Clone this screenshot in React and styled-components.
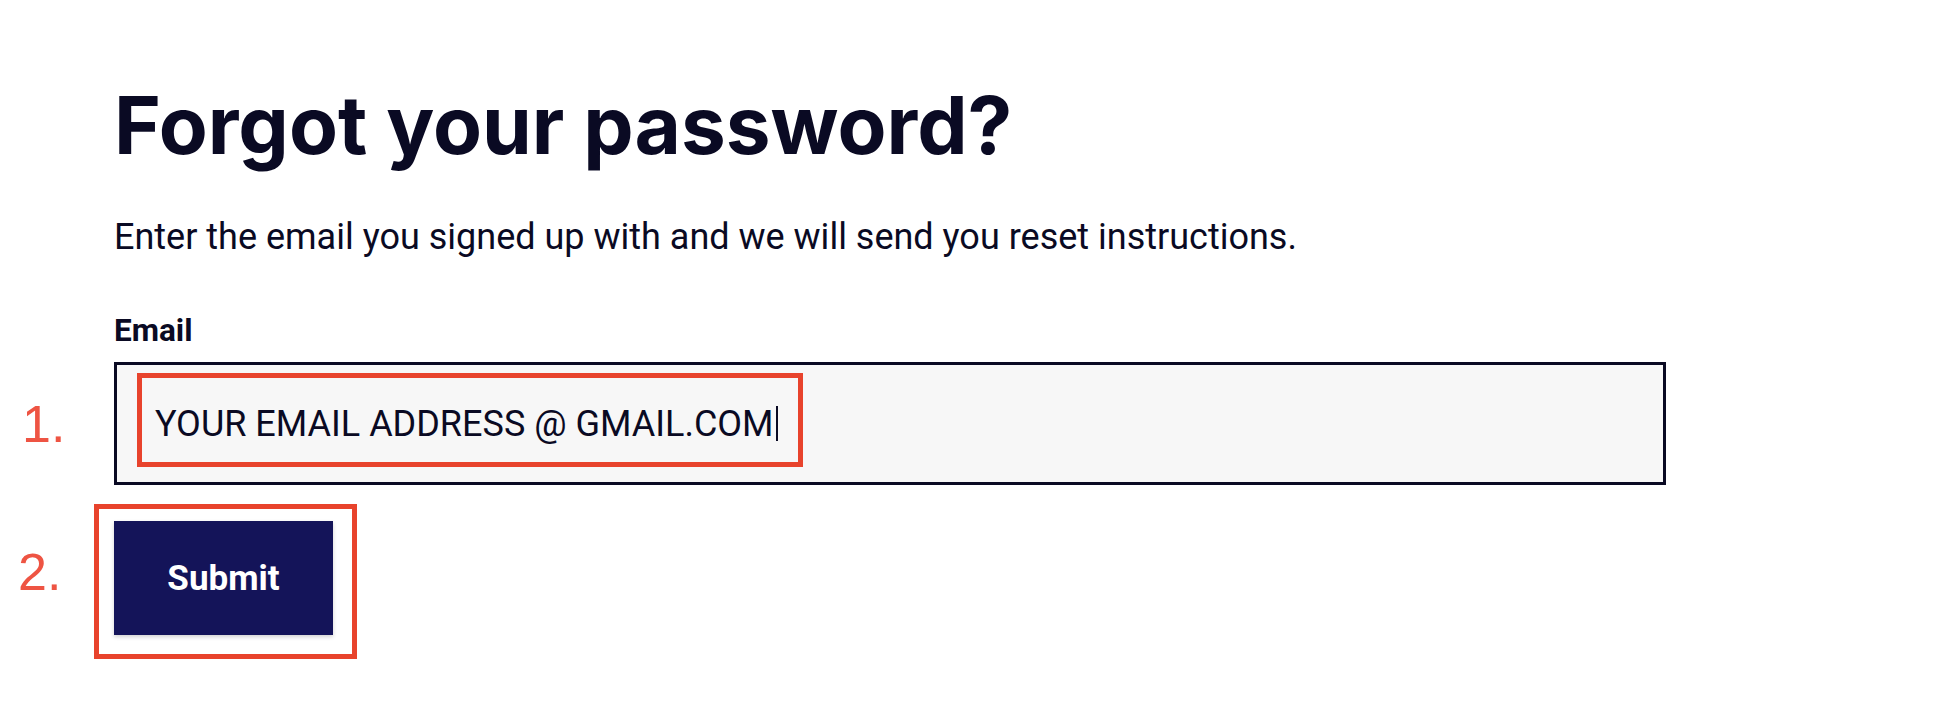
import React from "react";
import styled, { createGlobalStyle } from "styled-components";

const Global = createGlobalStyle`
  html, body { margin: 0; padding: 0; background: #ffffff; }
  body { font-family: Roboto, "Noto Sans", sans-serif; color: #0a0a23; }
  * { box-sizing: border-box; }
`;

const Page = styled.main`
  display: grid;
  grid-template-columns: 114px 1552px;
  padding-top: 77px;
  padding-bottom: 48px;
`;

const Title = styled.h1`
  grid-column: 2;
  margin: 0;
  font-family: Inter, "Noto Sans", sans-serif;
  font-weight: 700;
  font-size: 80px;
  line-height: 96px;
  color: #0a0a23;
`;

const Lead = styled.p`
  grid-column: 2;
  margin: 37px 0 0;
  font-family: Roboto, sans-serif;
  font-size: 36px;
  line-height: 54px;
  color: #0a0a23;
`;

const Label = styled.label`
  grid-column: 2;
  margin-top: 43px;
  font-family: Roboto, sans-serif;
  font-weight: 700;
  font-size: 31.5px;
  line-height: 48px;
  color: #0a0a23;
`;

const Marker = styled.div`
  grid-column: 1;
  align-self: center;
  padding-left: ${(p) => p.$indent || 20}px;
  margin-top: ${(p) => p.$top || 0}px;
  transform: translateY(${(p) => p.$shift || 0}px);
  font-family: "Liberation Sans", Arial, sans-serif;
  font-size: 52px;
  line-height: 60px;
  color: #ee5443;
`;

const Field = styled.div`
  grid-column: 2;
  position: relative;
  margin-top: ${(p) => p.$top}px;
  height: 123px;
  display: flex;
  align-items: center;
  padding-left: 38px;
  border: 3px solid #0a0a23;
  background: #f7f7f7;
  font-family: Roboto, sans-serif;
  font-size: 36px;
  color: #0a0a23;
`;

const Caret = styled.span`
  display: inline-block;
  width: 2px;
  height: 35px;
  margin-left: 2px;
  background: #0a0a23;
`;

const Highlight = styled.span`
  position: absolute;
  left: ${(p) => p.$left}px;
  top: ${(p) => p.$topOff}px;
  width: ${(p) => p.$w}px;
  height: ${(p) => p.$h}px;
  border: 5px solid #e8432c;
  pointer-events: none;
`;

const ButtonWrap = styled.div`
  grid-column: 2;
  position: relative;
  margin-top: 36px;
  width: 219px;
`;

const Button = styled.button`
  display: flex;
  align-items: center;
  justify-content: center;
  width: 219px;
  height: 114px;
  border: none;
  padding: 0;
  background: #141459;
  color: #ffffff;
  font-family: Roboto, sans-serif;
  font-weight: 700;
  font-size: 35px;
  box-shadow: 0 2px 4px rgba(0, 0, 0, 0.18);
  cursor: pointer;
`;

export default function App() {
  return (
    <>
      <Global />
      <Page>
        <Title>Forgot your password?</Title>
        <Lead>Enter the email you signed up with and we will send you reset instructions.</Lead>
        <Label htmlFor="email">Email</Label>
        <Marker $top={7} $indent={22}>1.</Marker>
        <Field id="email" $top={7}>
          <span>YOUR EMAIL ADDRESS @ GMAIL.COM</span>
          <Caret />
          <Highlight $left={20} $topOff={8} $w={666} $h={94} />
        </Field>
        <Marker $top={36} $shift={-6} $indent={18}>2.</Marker>
        <ButtonWrap>
          <Button type="submit">Submit</Button>
          <Highlight $left={-20} $topOff={-17} $w={263} $h={155} />
        </ButtonWrap>
      </Page>
    </>
  );
}
